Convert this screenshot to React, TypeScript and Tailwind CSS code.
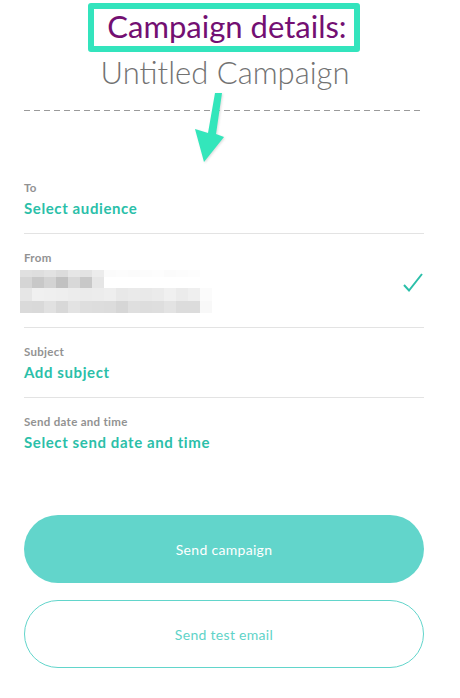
import React from "react";

const blurRows: string[][] = [
  ["bg-[#e0e0e0]", "bg-[#dedede]", "bg-[#e2e2e2]", "bg-[#dcdcdc]", "bg-[#e6e6e6]", "bg-[#e3e3e3]", "bg-[#ececec]", "bg-[#fbfbfb]", "bg-[#fcfcfc]", "bg-[#fbfbfb]", "bg-[#fcfcfc]", "bg-[#fdfdfd]", "bg-[#fbfbfb]", "bg-[#fcfcfc]", "bg-[#fdfdfd]", "bg-white"],
  ["bg-[#d5d5d5]", "bg-[#c8c8c8]", "bg-[#d3d3d3]", "bg-[#c1c1c1]", "bg-[#d8d8d8]", "bg-[#c8c8c8]", "bg-[#e6e6e6]", "bg-white", "bg-white", "bg-white", "bg-white", "bg-white", "bg-white", "bg-white", "bg-white", "bg-white"],
  ["bg-[#e6e6e6]", "bg-[#f0f0f0]", "bg-[#efefef]", "bg-[#eeeeee]", "bg-[#ececec]", "bg-[#ebebeb]", "bg-[#ececec]", "bg-[#eeeeee]", "bg-[#e8e8e8]", "bg-[#eaeaea]", "bg-[#e9e9e9]", "bg-[#ebebeb]", "bg-[#f0f0f0]", "bg-[#ebebeb]", "bg-[#efefef]", "bg-[#fbfbfb]"],
  ["bg-[#dadada]", "bg-[#d9d9d9]", "bg-[#e1e1e1]", "bg-[#d8d8d8]", "bg-[#e3e3e3]", "bg-[#dedede]", "bg-[#dddddd]", "bg-[#dcdcdc]", "bg-[#d6d6d6]", "bg-[#dfdfdf]", "bg-[#dddddd]", "bg-[#dedede]", "bg-[#e3e3e3]", "bg-[#dcdcdc]", "bg-[#dcdcdc]", "bg-[#f8f8f8]"],
];
const rowHeights = ["h-[7px]", "h-[11px]", "h-[13px]", "h-[12px]"];

function Field({ label, value, last }: { label: string; value: string; last?: boolean }) {
  return (
    <div className={`pt-[17px] pb-[15px] ${last ? "" : "border-b border-[#e3e3e3]"}`}>
      <div className="text-[11.5px] leading-[14px] font-bold text-[#929292] font-['Lato',sans-serif] tracking-[0.3px]">{label}</div>
      <div className="mt-[3px] text-[15px] leading-[20px] font-bold text-[#2bbfa9] font-['Lato',sans-serif] tracking-[0.6px]">{value}</div>
    </div>
  );
}

export default function App() {
  return (
    <div className="w-[460px] h-[698px] bg-white overflow-hidden">
      <div className="ml-6 w-[400px] relative">
        <div className="flex flex-col items-center pt-[3px]">
          <div className="w-[272px] h-[49px] border-[6px] border-[#33e4bd] rounded-[3px] flex items-center justify-center">
            <span className="font-['Lato',sans-serif] text-[31px] leading-none text-[#730f72] pl-[6px] pb-[2px]">Campaign details:</span>
          </div>
          <div className="mt-[2px] font-['Lato',sans-serif] font-light text-[31px] leading-[36px] text-[#727272] pl-[2px]">Untitled Campaign</div>
        </div>
        <div className="mt-[20px] h-px w-[397px] bg-[repeating-linear-gradient(to_right,#9a9a9a_0_6px,transparent_6px_10px)]" />
        <svg className="absolute left-[166px] top-[88px]" width="40" height="80" viewBox="0 0 40 80">
          <defs>
            <filter id="sh" x="-30%" y="-30%" width="160%" height="160%">
              <feGaussianBlur stdDeviation="0.8" />
            </filter>
          </defs>
          <polygon points="25,5 32,5 26,46 34,49 14,74 5,41 18,45" fill="#bbbbbb" opacity="0.5" filter="url(#sh)" transform="translate(1,1)" />
          <polygon points="25,5 32,5 26,46 34,49 14,74 5,41 18,45" fill="#33e6bb" />
        </svg>

        <div className="mt-[53px]">
          <Field label="To" value="Select audience" />
          <div className="pt-[17px] pb-[14px] border-b border-[#e3e3e3] flex items-center justify-between">
            <div>
              <div className="text-[11.5px] leading-[14px] font-bold text-[#929292] font-['Lato',sans-serif] tracking-[0.3px]">From</div>
              <div className="mt-[5px] ml-[-4px] flex flex-col">
                {blurRows.map((row, i) => (
                  <div key={i} className={`flex ${rowHeights[i]}`}>
                    {row.map((c, j) => (
                      <div key={j} className={`w-[12px] ${c}`} />
                    ))}
                  </div>
                ))}
              </div>
            </div>
            <svg width="20" height="20" viewBox="0 0 20 20" className="mr-[1px] mt-[2px]">
              <path d="M1 12 L6 17.5 L19 1" fill="none" stroke="#2bbfa9" strokeWidth="2" />
            </svg>
          </div>
          <Field label="Subject" value="Add subject" />
          <Field label="Send date and time" value="Select send date and time" last />
        </div>

        <div className="mt-[48px] flex flex-col gap-[17px]">
          <button className="h-[68px] w-[400px] rounded-full bg-[#62d5cb] text-white font-['Lato',sans-serif] text-[14px] tracking-[0.3px]">Send campaign</button>
          <button className="h-[68px] w-[400px] rounded-full border border-[#62d5cb] bg-white text-[#5fd3c8] font-['Lato',sans-serif] text-[14px] tracking-[0.3px]">Send test email</button>
        </div>
      </div>
    </div>
  );
}
